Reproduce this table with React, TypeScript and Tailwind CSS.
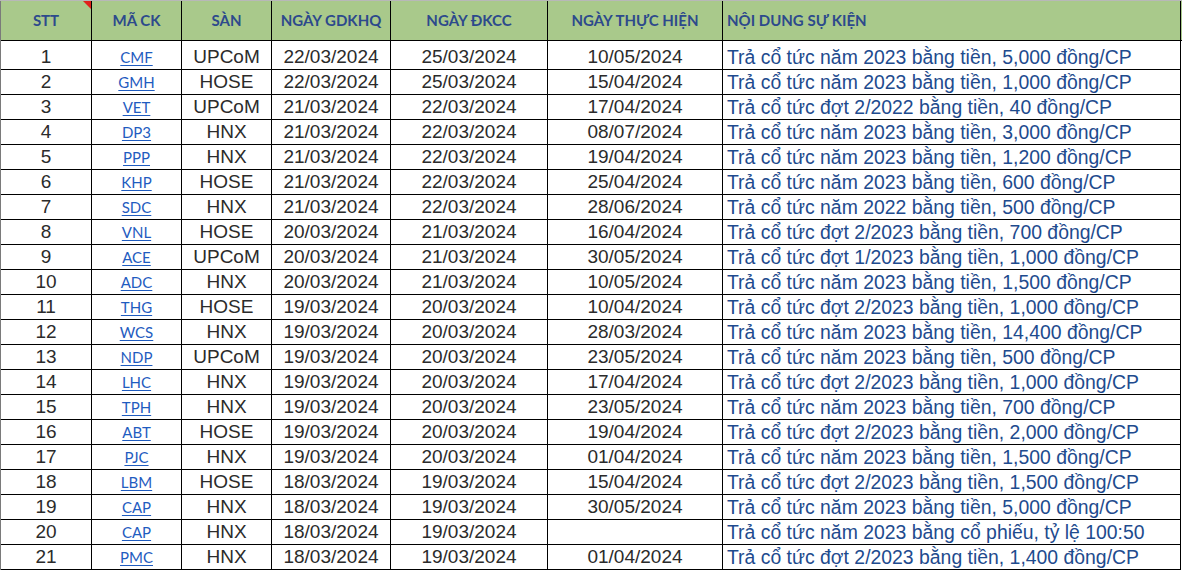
const rows: [string, string, string, string, string, string][] = [
  ["CMF", "UPCoM", "22/03/2024", "25/03/2024", "10/05/2024", "Trả cổ tức năm 2023 bằng tiền, 5,000 đồng/CP"],
  ["GMH", "HOSE", "22/03/2024", "25/03/2024", "15/04/2024", "Trả cổ tức năm 2023 bằng tiền, 1,000 đồng/CP"],
  ["VET", "UPCoM", "21/03/2024", "22/03/2024", "17/04/2024", "Trả cổ tức đợt 2/2022 bằng tiền, 40 đồng/CP"],
  ["DP3", "HNX", "21/03/2024", "22/03/2024", "08/07/2024", "Trả cổ tức năm 2023 bằng tiền, 3,000 đồng/CP"],
  ["PPP", "HNX", "21/03/2024", "22/03/2024", "19/04/2024", "Trả cổ tức năm 2023 bằng tiền, 1,200 đồng/CP"],
  ["KHP", "HOSE", "21/03/2024", "22/03/2024", "25/04/2024", "Trả cổ tức năm 2023 bằng tiền, 600 đồng/CP"],
  ["SDC", "HNX", "21/03/2024", "22/03/2024", "28/06/2024", "Trả cổ tức năm 2022 bằng tiền, 500 đồng/CP"],
  ["VNL", "HOSE", "20/03/2024", "21/03/2024", "16/04/2024", "Trả cổ tức đợt 2/2023 bằng tiền, 700 đồng/CP"],
  ["ACE", "UPCoM", "20/03/2024", "21/03/2024", "30/05/2024", "Trả cổ tức đợt 1/2023 bằng tiền, 1,000 đồng/CP"],
  ["ADC", "HNX", "20/03/2024", "21/03/2024", "10/05/2024", "Trả cổ tức năm 2023 bằng tiền, 1,500 đồng/CP"],
  ["THG", "HOSE", "19/03/2024", "20/03/2024", "10/04/2024", "Trả cổ tức đợt 2/2023 bằng tiền, 1,000 đồng/CP"],
  ["WCS", "HNX", "19/03/2024", "20/03/2024", "28/03/2024", "Trả cổ tức năm 2023 bằng tiền, 14,400 đồng/CP"],
  ["NDP", "UPCoM", "19/03/2024", "20/03/2024", "23/05/2024", "Trả cổ tức năm 2023 bằng tiền, 500 đồng/CP"],
  ["LHC", "HNX", "19/03/2024", "20/03/2024", "17/04/2024", "Trả cổ tức đợt 2/2023 bằng tiền, 1,000 đồng/CP"],
  ["TPH", "HNX", "19/03/2024", "20/03/2024", "23/05/2024", "Trả cổ tức năm 2023 bằng tiền, 700 đồng/CP"],
  ["ABT", "HOSE", "19/03/2024", "20/03/2024", "19/04/2024", "Trả cổ tức đợt 2/2023 bằng tiền, 2,000 đồng/CP"],
  ["PJC", "HNX", "19/03/2024", "20/03/2024", "01/04/2024", "Trả cổ tức năm 2023 bằng tiền, 1,500 đồng/CP"],
  ["LBM", "HOSE", "18/03/2024", "19/03/2024", "15/04/2024", "Trả cổ tức đợt 2/2023 bằng tiền, 1,500 đồng/CP"],
  ["CAP", "HNX", "18/03/2024", "19/03/2024", "30/05/2024", "Trả cổ tức năm 2023 bằng tiền, 5,000 đồng/CP"],
  ["CAP", "HNX", "18/03/2024", "19/03/2024", "", "Trả cổ tức năm 2023 bằng cổ phiếu, tỷ lệ 100:50"],
  ["PMC", "HNX", "18/03/2024", "19/03/2024", "01/04/2024", "Trả cổ tức đợt 2/2023 bằng tiền, 1,400 đồng/CP"],
];

const grid = "grid grid-cols-[91px_90px_90px_119px_157px_175px_458px]";
const cell = "flex items-end justify-center border-r border-b border-black leading-[24px] whitespace-nowrap overflow-hidden";

function App() {
  return (
    <div className="w-[1182px] h-[571px] bg-white overflow-hidden border-t border-[#b8b8b8]">
      <div className="border-l border-[#7a7a7a] w-[1182px]">
        <div className={`${grid} h-[39px] bg-[#a9c98b] font-['Lato',sans-serif] font-bold text-[15px] text-[#2d4a8c]`}>
          <div className="relative flex items-center justify-center border-r border-black">
            STT
            <div className="absolute top-0 right-0 w-0 h-0 border-t-[8px] border-t-[#e0201b] border-l-[8px] border-l-transparent" />
          </div>
          <div className="flex items-center justify-center border-r border-black">MÃ CK</div>
          <div className="flex items-center justify-center border-r border-black">SÀN</div>
          <div className="flex items-center justify-center border-r border-black">NGÀY GDKHQ</div>
          <div className="flex items-center justify-center border-r border-black">NGÀY ĐKCC</div>
          <div className="flex items-center justify-center border-r border-black">NGÀY THỰC HIỆN</div>
          <div className="flex items-center justify-start pl-[4px] border-r border-black">NỘI DUNG SỰ KIỆN</div>
        </div>
        <div className="border-t border-black">
          {rows.map((r, i) => (
            <div
              key={i}
              className={`${grid} ${i === 0 ? "h-[29px]" : "h-[25px]"} font-['Liberation_Sans',Arial,sans-serif] text-[19px] text-[#2b2b2b]`}
            >
              <div className={cell}>{i + 1}</div>
              <div className={cell}>
                <span className="font-['Lato',sans-serif] text-[15px] text-[#1f5cc0] underline underline-offset-2">{r[0]}</span>
              </div>
              <div className={cell}>{r[1]}</div>
              <div className={cell}>{r[2]}</div>
              <div className={cell}>{r[3]}</div>
              <div className={cell}>{r[4]}</div>
              <div className={`${cell} !justify-start pl-[4px] text-[19.4px] text-[#1e4b8e]`}>{r[5]}</div>
            </div>
          ))}
        </div>
      </div>
    </div>
  );
}

export default App;
